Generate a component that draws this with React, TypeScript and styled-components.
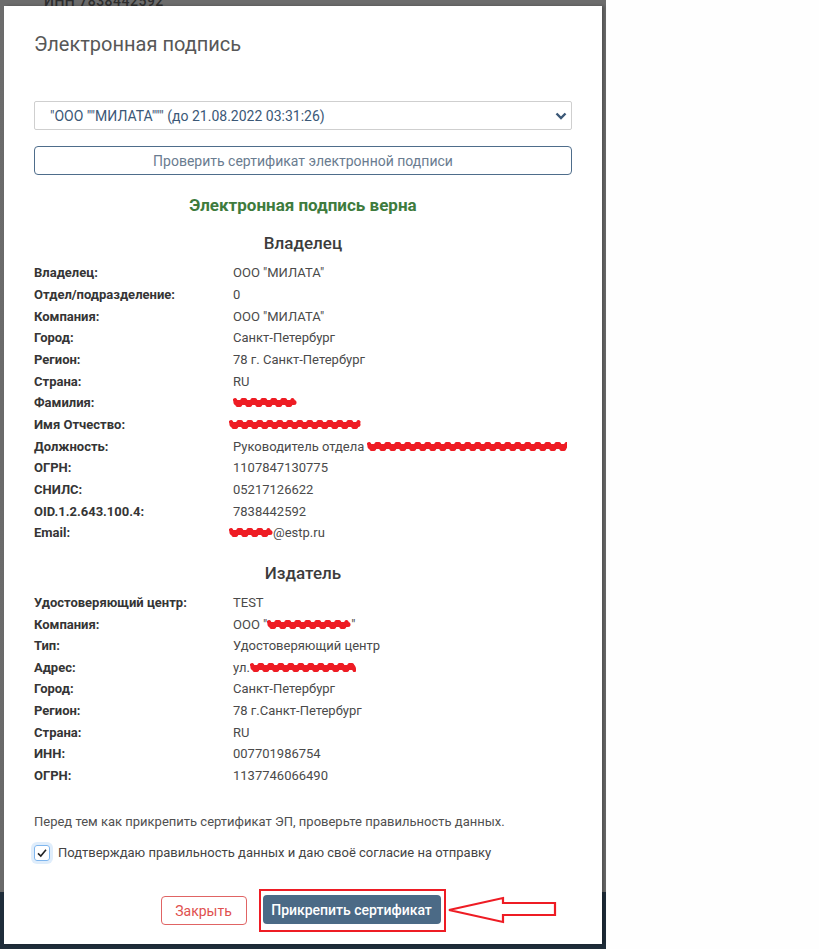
import React from "react";
import styled, { createGlobalStyle } from "styled-components";

type Row = { label: string; value: React.ReactNode };

const GlobalStyle = createGlobalStyle`
  html, body {
    margin: 0;
    padding: 0;
    background: #fefefe;
  }
  body {
    font-family: Roboto, "Liberation Sans", Arial, sans-serif;
  }
`;

const Scribble = ({ width }: { width: number }) => {
  // red marker redaction over private data
  const pts: string[] = [];
  for (let x = 2; x < width - 2; x += 5) {
    pts.push(`${x},${x % 10 === 2 ? 3 : 8} ${x + 2.5},${x % 10 === 2 ? 8 : 3}`);
  }
  return (
    <ScribbleSvg width={width} height={11} viewBox={`0 0 ${width} 11`}>
      <polyline
        points={pts.join(" ")}
        fill="none"
        stroke="#ee1c24"
        strokeWidth={4}
        strokeLinejoin="round"
        strokeLinecap="round"
      />
      <line x1={3} y1={5.5} x2={width - 3} y2={5.5} stroke="#ee1c24" strokeWidth={5} strokeLinecap="round" />
    </ScribbleSvg>
  );
};

const getOwner = (): Row[] => [
  { label: "Владелец:", value: 'ООО "МИЛАТА"' },
  { label: "Отдел/подразделение:", value: "0" },
  { label: "Компания:", value: 'ООО "МИЛАТА"' },
  { label: "Город:", value: "Санкт-Петербург" },
  { label: "Регион:", value: "78 г. Санкт-Петербург" },
  { label: "Страна:", value: "RU" },
  { label: "Фамилия:", value: <Scribble width={64} /> },
  { label: "Имя Отчество:", value: <Hidden><Scribble width={132} /></Hidden> },
  {
    label: "Должность:",
    value: (
      <>
        Руководитель отдела&nbsp;<Scribble width={200} />
      </>
    ),
  },
  { label: "ОГРН:", value: "1107847130775" },
  { label: "СНИЛС:", value: "05217126622" },
  { label: "OID.1.2.643.100.4:", value: "7838442592" },
  {
    label: "Email:",
    value: (
      <Hidden>
        <Scribble width={44} />@estp.ru
      </Hidden>
    ),
  },
];

const getIssuer = (): Row[] => [
  { label: "Удостоверяющий центр:", value: "TEST" },
  {
    label: "Компания:",
    value: (
      <>
        ООО "<Scribble width={84} />"
      </>
    ),
  },
  { label: "Тип:", value: "Удостоверяющий центр" },
  {
    label: "Адрес:",
    value: (
      <>
        ул.<Scribble width={106} />
      </>
    ),
  },
  { label: "Город:", value: "Санкт-Петербург" },
  { label: "Регион:", value: "78 г.Санкт-Петербург" },
  { label: "Страна:", value: "RU" },
  { label: "ИНН:", value: "007701986754" },
  { label: "ОГРН:", value: "1137746066490" },
];

const InfoTable = ({ rows }: { rows: Row[] }) => (
  <Table>
    {rows.map((r, i) => (
      <React.Fragment key={i}>
        <Label>{r.label}</Label>
        <Value>{r.value}</Value>
      </React.Fragment>
    ))}
  </Table>
);

const App = () => {
  return (
    <Page>
      <GlobalStyle />
      <Backdrop>
        <BehindText>ИНН 7838442592</BehindText>
        <Modal>
          <Title>Электронная подпись</Title>
          <Select>
            <span>"ООО ""МИЛАТА""" (до 21.08.2022 03:31:26)</span>
            <svg width="12" height="8" viewBox="0 0 12 8">
              <path d="M1.5 1.5 L6 6 L10.5 1.5" fill="none" stroke="#3b5877" strokeWidth="2.4" />
            </svg>
          </Select>
          <OutlineButton>Проверить сертификат электронной подписи</OutlineButton>
          <Status>Электронная подпись верна</Status>
          <SectionTitle>Владелец</SectionTitle>
          <InfoTable rows={getOwner()} />
          <SectionTitle $gap={18}>Издатель</SectionTitle>
          <InfoTable rows={getIssuer()} />
          <Note>Перед тем как прикрепить сертификат ЭП, проверьте правильность данных.</Note>
          <CheckRow>
            <CheckBox>
              <svg width="12" height="12" viewBox="0 0 12 12">
                <path d="M2 6.3 L4.8 9 L10 2.8" fill="none" stroke="#222" strokeWidth="1.6" />
              </svg>
            </CheckBox>
            Подтверждаю правильность данных и даю своё согласие на отправку
          </CheckRow>
          <Footer>
            <CloseButton>Закрыть</CloseButton>
            <Highlight>
              <PrimaryButton>Прикрепить сертификат</PrimaryButton>
              <Arrow width="110" height="30" viewBox="0 0 110 30">
                <polygon
                  points="1,14 55,2 55,7 107,7 107,19 55,19 55,26"
                  fill="none"
                  stroke="#ee1c24"
                  strokeWidth="2.2"
                />
              </Arrow>
            </Highlight>
          </Footer>
        </Modal>
      </Backdrop>
    </Page>
  );
};

export default App;

const Page = styled.div`
  display: flex;
  width: 819px;
  height: 949px;
  overflow: hidden;
  background: #fefefe;
`;

const Backdrop = styled.div`
  position: relative;
  width: 606px;
  height: 949px;
  flex-shrink: 0;
  padding: 6px 0 0 4px;
  box-sizing: border-box;
  background: linear-gradient(to bottom, #6c6c6c 0, #6a6a6a 892px, #1f2d3a 892px);
`;

const BehindText = styled.div`
  position: absolute;
  top: -7px;
  left: 44px;
  font-size: 14px;
  font-weight: 500;
  color: #2e2e2e;
  letter-spacing: 0.5px;
`;

const Modal = styled.div`
  position: relative;
  width: 598px;
  height: 938px;
  box-sizing: border-box;
  background: #fff;
  padding: 26px 30px 0 30px;
  display: flex;
  flex-direction: column;
  box-shadow: 2px 0 3px rgba(0, 0, 0, 0.25);
`;

const Title = styled.h1`
  margin: 0;
  font-size: 20px;
  line-height: 24px;
  font-weight: 400;
  color: #575757;
`;

const Select = styled.div`
  margin-top: 45px;
  height: 29px;
  box-sizing: border-box;
  border: 1px solid #cfcfcf;
  border-radius: 2px;
  display: flex;
  align-items: center;
  justify-content: space-between;
  padding: 0 4px 0 15px;
  font-size: 14px;
  color: #3b5877;
`;

const OutlineButton = styled.button`
  margin-top: 16px;
  height: 29px;
  width: 100%;
  border: 1px solid #4e6d8b;
  border-radius: 4px;
  background: #fff;
  font-family: inherit;
  font-size: 14px;
  color: #6a7c90;
  padding: 0;
`;

const Status = styled.div`
  margin-top: 20px;
  text-align: center;
  font-size: 17px;
  line-height: 20px;
  font-weight: 700;
  color: #3e7b3d;
`;

const SectionTitle = styled.div<{ $gap?: number }>`
  margin-top: ${(p) => p.$gap ?? 17}px;
  text-align: center;
  font-size: 17px;
  line-height: 22px;
  font-weight: 500;
  color: #3c3c3c;
`;

const Table = styled.div`
  margin-top: 8px;
  display: grid;
  grid-template-columns: 199px 1fr;
  grid-auto-rows: 21.67px;
  align-items: center;
  font-size: 13px;
`;

const Label = styled.div`
  font-weight: 700;
  color: #353535;
`;

const Value = styled.div`
  display: flex;
  align-items: center;
  color: #4a4a4a;
  white-space: nowrap;
`;

const Hidden = styled.span`
  display: inline-flex;
  align-items: center;
  margin-left: -4px;
`;

const ScribbleSvg = styled.svg`
  display: inline-block;
  vertical-align: middle;
`;

const Note = styled.div`
  margin-top: 27px;
  font-size: 13px;
  line-height: 18px;
  color: #505050;
`;

const CheckRow = styled.label`
  margin-top: 12px;
  display: flex;
  align-items: center;
  gap: 8px;
  font-size: 13px;
  line-height: 20px;
  color: #444;
`;

const CheckBox = styled.span`
  width: 16px;
  height: 16px;
  box-sizing: border-box;
  border: 1px solid #7fb6ee;
  border-radius: 3px;
  display: flex;
  align-items: center;
  justify-content: center;
  box-shadow: 0 0 0 3px rgba(128, 182, 238, 0.25);
`;

const Footer = styled.div`
  margin-top: 26px;
  display: flex;
  justify-content: center;
  align-items: center;
  gap: 12px;
`;

const CloseButton = styled.button`
  width: 86px;
  height: 29px;
  background: #fff;
  border: 1px solid #e06464;
  border-radius: 4px;
  color: #e0504f;
  font-family: inherit;
  font-size: 14px;
  padding: 0;
`;

const Highlight = styled.div`
  position: relative;
  border: 2px solid #ee1c24;
  padding: 4px 3px 6px 2px;
  display: flex;
`;

const PrimaryButton = styled.button`
  width: 178px;
  height: 29px;
  background: #4b6a86;
  border: none;
  border-radius: 4px;
  color: #fff;
  font-family: inherit;
  font-size: 14px;
  font-weight: 500;
  padding: 0;
`;

const Arrow = styled.svg`
  position: absolute;
  left: calc(100% + 4px);
  top: 5px;
`;
